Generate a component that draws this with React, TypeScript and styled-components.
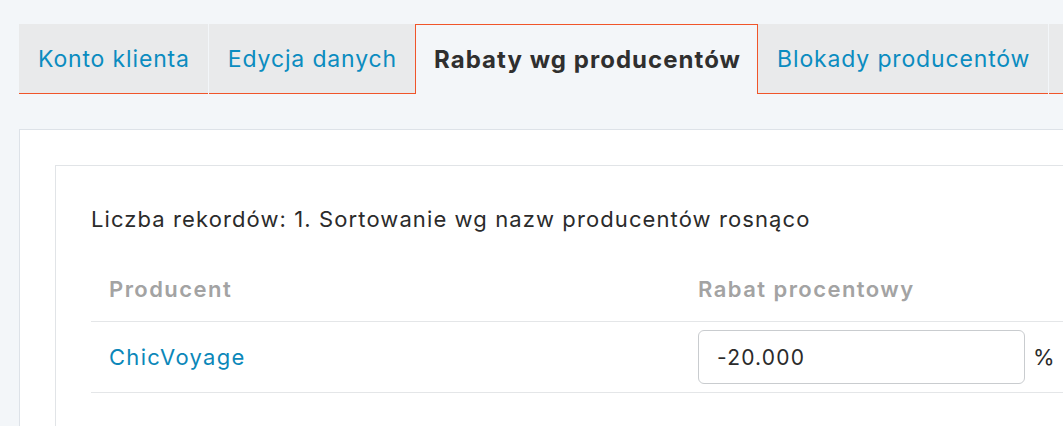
import styled, { createGlobalStyle } from 'styled-components';

const GlobalStyle = createGlobalStyle`
  body {
    margin: 0;
    background: #f3f6f9;
    font-family: Inter, "Noto Sans", sans-serif;
    color: #2b2b2b;
    overflow: hidden;
  }
`;

const Page = styled.div`
  width: 1200px;
  padding: 24px 0 0 19px;
`;

const TabBar = styled.div`
  display: flex;
  gap: 1px;
`;

const Tab = styled.div<{ $active?: boolean }>`
  height: 70px;
  min-width: 60px;
  box-sizing: border-box;
  display: flex;
  align-items: center;
  padding: ${(p) => (p.$active ? '0 16px 0 18px' : '0 18px 0 19px')};
  white-space: nowrap;
  font-size: ${(p) => (p.$active ? '24px' : '23px')};
  letter-spacing: ${(p) => (p.$active ? '1.05px' : '0.85px')};
  background: ${(p) => (p.$active ? '#f3f6f9' : '#e9eaeb')};
  color: ${(p) => (p.$active ? '#2f2f2f' : '#0b8cc0')};
  font-weight: ${(p) => (p.$active ? 700 : 400)};
  border-style: solid;
  border-color: #f0552a;
  border-width: ${(p) => (p.$active ? '1px 1px 0 1px' : '0 0 1px 0')};
  margin: ${(p) => (p.$active ? '0 -1px' : '0')};
  position: relative;
  z-index: ${(p) => (p.$active ? 1 : 0)};
`;

const Card = styled.div<{ $inner?: boolean }>`
  background: #fff;
  border: 1px solid ${(p) => (p.$inner ? '#e1e4e7' : '#dde2e8')};
  padding: 35px;
  margin-top: ${(p) => (p.$inner ? '0' : '35px')};
  min-height: 300px;
`;

const Caption = styled.div`
  font-size: 22px;
  letter-spacing: 1.1px;
  line-height: 36px;
  color: #2b2b2b;
  margin-bottom: 20px;
`;

const Table = styled.div`
  display: grid;
  grid-template-columns: 589px 1fr;
`;

const HeadCell = styled.div`
  height: 64px;
  display: flex;
  align-items: center;
  padding: 0 18px;
  font-size: 22px;
  letter-spacing: 1.45px;
  font-weight: 600;
  color: #a3a3a3;
  border-bottom: 1px solid #e4e6e8;
`;

const Cell = styled.div`
  height: 71px;
  box-sizing: border-box;
  display: flex;
  align-items: center;
  gap: 8px;
  padding: 0 18px;
  font-size: 22px;
  border-bottom: 1px solid #e4e6e8;
`;

const Link = styled.a`
  color: #0b87b9;
  text-decoration: none;
  letter-spacing: 1.3px;
`;

const Input = styled.input`
  width: 327px;
  height: 54px;
  box-sizing: border-box;
  border: 1px solid #c9cccf;
  border-radius: 6px;
  padding: 0 18px;
  font-family: inherit;
  font-size: 21px;
  letter-spacing: 1.2px;
  color: #2b2b2b;
  background: #fff;
  outline: none;
`;

const Unit = styled.span`
  font-size: 22px;
  color: #2b2b2b;
`;

export default function App() {
  return (
    <>
      <GlobalStyle />
      <Page>
        <TabBar>
          <Tab>Konto klienta</Tab>
          <Tab>Edycja danych</Tab>
          <Tab $active>Rabaty wg producentów</Tab>
          <Tab>Blokady producentów</Tab>
          <Tab aria-label="Więcej" />
        </TabBar>
        <Card>
          <Card $inner>
            <Caption>Liczba rekordów: 1. Sortowanie wg nazw producentów rosnąco</Caption>
            <Table>
              <HeadCell>Producent</HeadCell>
              <HeadCell>Rabat procentowy</HeadCell>
              <Cell>
                <Link href="#">ChicVoyage</Link>
              </Cell>
              <Cell>
                <Input defaultValue="-20.000" />
                <Unit>%</Unit>
              </Cell>
            </Table>
          </Card>
        </Card>
      </Page>
    </>
  );
}
